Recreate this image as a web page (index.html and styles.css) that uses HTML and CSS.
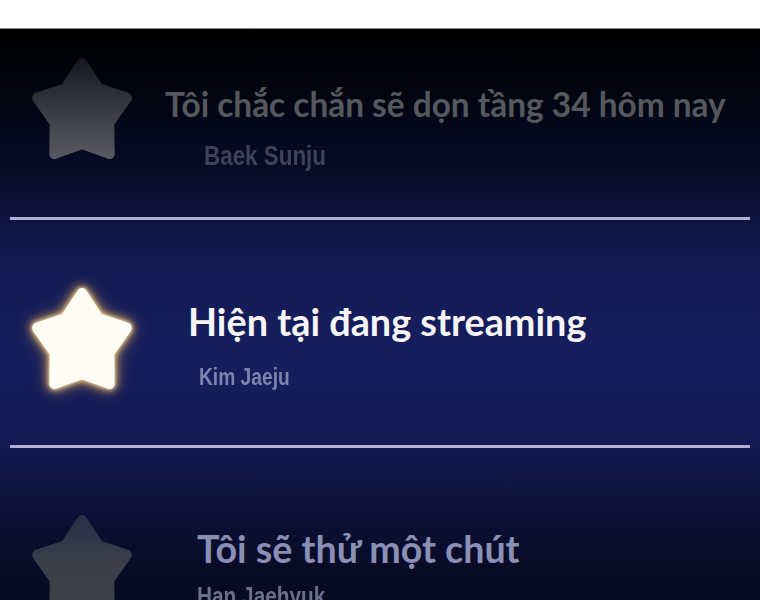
FILE: index.html
```html
<!DOCTYPE html>
<html lang="vi">
<head>
<meta charset="utf-8">
<title>Danh sách</title>
<link rel="stylesheet" href="styles.css">
</head>
<body>
<div class="top-band"></div>
<main class="panel">
  <section class="entry entry--past">
    <svg class="star" viewBox="1 0 98 94" preserveAspectRatio="none" aria-hidden="true">
      <defs>
        <linearGradient id="g-past" x1="0" y1="0" x2="0" y2="94" gradientUnits="userSpaceOnUse">
          <stop offset="0" stop-color="#17181f"/>
          <stop offset="1" stop-color="#595a63"/>
        </linearGradient>
      </defs>
      <polygon points="50,5 66.46,28.35 93.75,36.79 76.63,59.65 77.04,88.21 50,79 22.96,88.21 23.37,59.65 6.25,36.79 33.54,28.35" fill="url(#g-past)" stroke="url(#g-past)" stroke-width="10" stroke-linejoin="round"/>
    </svg>
    <div class="text">
      <h2 class="title">Tôi chắc chắn sẽ dọn tầng 34 hôm nay</h2>
      <p class="author"><span class="author-name">Baek Sunju</span></p>
    </div>
  </section>
  <hr class="divider">
  <section class="entry entry--current">
    <svg class="star star--glow" viewBox="1 0 98 94" preserveAspectRatio="none" aria-hidden="true">
      <polygon points="50,5 66.46,28.35 93.75,36.79 76.63,59.65 77.04,88.21 50,79 22.96,88.21 23.37,59.65 6.25,36.79 33.54,28.35" fill="#fffcf3" stroke="#fffcf3" stroke-width="10" stroke-linejoin="round"/>
    </svg>
    <div class="text">
      <h2 class="title">Hiện tại đang streaming</h2>
      <p class="author"><span class="author-name">Kim Jaeju</span></p>
    </div>
  </section>
  <hr class="divider">
  <section class="entry entry--next">
    <svg class="star" viewBox="1 0 98 94" preserveAspectRatio="none" aria-hidden="true">
      <defs>
        <linearGradient id="g-next" x1="0" y1="0" x2="0" y2="94" gradientUnits="userSpaceOnUse">
          <stop offset="0" stop-color="#2b2e46"/>
          <stop offset="0.5" stop-color="#3c3f4a"/>
          <stop offset="1" stop-color="#3e4148"/>
        </linearGradient>
      </defs>
      <polygon points="50,5 66.46,28.35 93.75,36.79 76.63,59.65 77.04,88.21 50,79 22.96,88.21 23.37,59.65 6.25,36.79 33.54,28.35" fill="url(#g-next)" stroke="url(#g-next)" stroke-width="10" stroke-linejoin="round"/>
    </svg>
    <div class="text">
      <h2 class="title">Tôi sẽ thử một chút</h2>
      <p class="author"><span class="author-name">Han Jaehyuk</span></p>
    </div>
  </section>
</main>
</body>
</html>
```

FILE: styles.css
```css
html, body {
  margin: 0;
  padding: 0;
  background: #ffffff;
}

body {
  width: 760px;
  height: 600px;
  overflow: hidden;
  font-family: "Lato", "Open Sans", sans-serif;
}

.top-band {
  height: 28px;
  background: #ffffff;
}

.panel {
  height: 572px;
  border-top: 1px solid #8a8a8a;
  box-sizing: border-box;
  display: flex;
  flex-direction: column;
  overflow: hidden;
  background:
    linear-gradient(180deg,
      #000000 0px,
      #030410 60px,
      #070b26 140px,
      #0e1440 190px,
      #141b55 240px,
      #161e5e 330px,
      #131a55 410px,
      #0c1238 480px,
      #080b26 540px,
      #070a20 572px);
}

.entry {
  display: flex;
  align-items: flex-start;
  padding-left: 32px;
  flex-shrink: 0;
}

.entry--past { height: 188px; }
.entry--current { height: 225px; }
.entry--next { flex: 1 0 auto; }

.star {
  flex: none;
  width: 100px;
  height: 102px;
}

.star--glow {
  filter:
    drop-shadow(0 0 2px #fbe9bf)
    drop-shadow(0 0 4px rgba(214, 172, 98, 0.95))
    drop-shadow(0 0 7px rgba(160, 120, 70, 0.7));
}

.text {
  display: flex;
  flex-direction: column;
}

.title {
  margin: 0;
  font-weight: 700;
  line-height: 1;
  white-space: nowrap;
}

.author {
  margin: 0;
  font-family: "Liberation Sans", Arial, sans-serif;
  font-weight: 700;
  line-height: 1;
  white-space: nowrap;
}

.author-name {
  display: inline-block;
  transform: scaleX(0.8);
  transform-origin: 0 50%;
}

.divider {
  flex-shrink: 0;
  margin: 0 10px;
  height: 3px;
  border: 0;
  background: #aeb1d6;
}

/* past row */
.entry--past .star { margin-top: 29px; }
.entry--past .text { padding-top: 59px; padding-left: 33px; }
.entry--past .title { font-size: 33.4px; color: #56585f; }
.entry--past .author { font-size: 28px; color: #3f4254; margin-top: 21px; padding-left: 39px; }

/* current row */
.entry--current .star { margin-top: 68px; }
.entry--current .text { padding-top: 83px; padding-left: 56px; }
.entry--current .title { font-size: 37.8px; color: #f5f5f8; }
.entry--current .author { font-size: 24px; color: #7c84ad; margin-top: 24px; padding-left: 11px; }

/* next row */
.entry--next .star { margin-top: 67px; }
.entry--next .text { padding-top: 82px; padding-left: 65px; }
.entry--next .title { font-size: 37.6px; color: #8a90b4; }
.entry--next .author { font-size: 26px; color: #6a6f8c; margin-top: 15px; }
```
